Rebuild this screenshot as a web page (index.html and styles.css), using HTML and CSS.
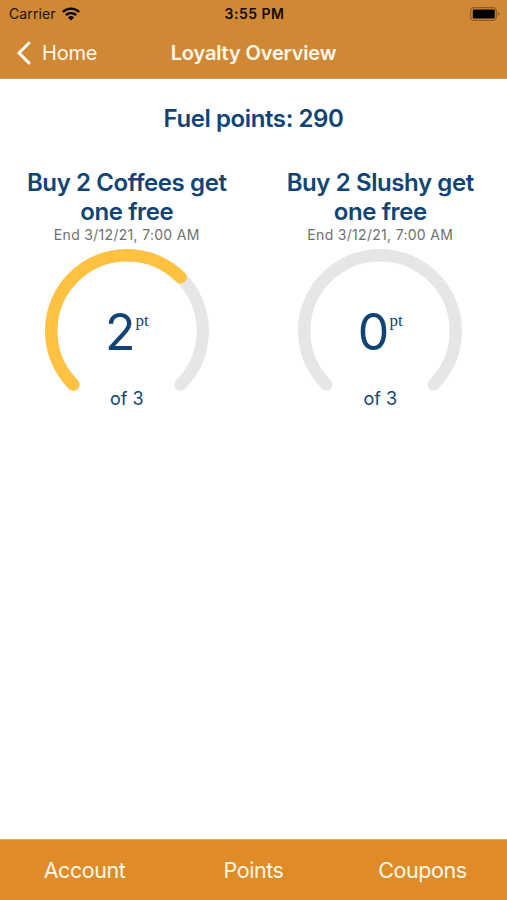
FILE: index.html
```html
<!DOCTYPE html>
<html lang="en">
<head>
<meta charset="utf-8">
<title>Loyalty Overview</title>
<link rel="stylesheet" href="styles.css">
</head>
<body>
<header class="header">
  <div class="status">
    <div class="carrier"><span>Carrier</span>
      <svg class="wifi" width="18" height="14" viewBox="0 0 18 14" fill="none" stroke="#000" stroke-width="2.4"><path d="M.9 5A11.5 11.5 0 0 1 17.1 5M3.9 8.2A7.2 7.2 0 0 1 14.1 8.2"/><path d="M6 10.4A4.3 4.3 0 0 1 12 10.4L9 13.6Z" fill="#000" stroke="none"/></svg>
    </div>
    <div class="time">3:55 PM</div>
    <svg class="battery" width="30" height="14" viewBox="0 0 30 14"><rect x=".6" y=".6" width="25.8" height="12.8" rx="3.6" fill="none" stroke="#8d5c24" stroke-width="1.2"/><rect x="2.8" y="2.6" width="22" height="8.800" rx="1.2" fill="#000"/><path d="M27.800 4.800Q31 7 27.800 9.200Z" fill="#8d5c24"/></svg>
  </div>
  <nav class="nav">
    <a class="back"><svg width="14" height="24" viewBox="0 0 14 24" fill="none" stroke="#fff" stroke-width="3" stroke-linecap="round" stroke-linejoin="round"><path d="M12 2L2 12L12 22"/></svg><span>Home</span></a>
    <h1 class="title">Loyalty Overview</h1>
  </nav>
</header>
<main class="main">
  <h2 class="fuel">Fuel points: 290</h2>
  <div class="cards">
    <section class="card">
      <h3 class="offer">Buy 2 Coffees get<br>one free</h3>
      <p class="end">End 3/12/21, 7:00 AM</p>
      <div class="gauge">
        <svg class="ring" viewBox="0 0 164 164"><circle class="track" cx="82" cy="82" r="75.800" pathLength="360" transform="rotate(135 82 82)"/><circle class="progress" cx="82" cy="82" r="75.800" pathLength="360" transform="rotate(135 82 82)"/></svg>
        <div class="value">2<span class="unit">pt</span></div>
        <div class="total">of 3</div>
      </div>
    </section>
    <section class="card">
      <h3 class="offer">Buy 2 Slushy get<br>one free</h3>
      <p class="end">End 3/12/21, 7:00 AM</p>
      <div class="gauge">
        <svg class="ring" viewBox="0 0 164 164"><circle class="track" cx="82" cy="82" r="75.800" pathLength="360" transform="rotate(135 82 82)"/></svg>
        <div class="value">0<span class="unit">pt</span></div>
        <div class="total">of 3</div>
      </div>
    </section>
  </div>
</main>
<footer class="tabs"><a>Account</a><a>Points</a><a>Coupons</a></footer>
</body>
</html>
```
FILE: styles.css
```css
* { box-sizing: border-box; }
body {
  margin: 0;
  height: 900px;
  display: flex;
  flex-direction: column;
  background: #fff;
  color: #104476;
  font-family: Inter, "Liberation Sans", sans-serif;
}
h1, h2, h3, p { margin: 0; }
.header { height: 79px; background: #d08835; border-bottom: 1px solid #d79a55; }
.status {
  height: 27px;
  display: grid;
  grid-template-columns: 1fr auto 1fr;
  align-items: center;
  padding: 0 7px 0 9px;
  color: #1a1208;
}
.carrier { display: flex; align-items: center; gap: 6px; font-size: 14px; letter-spacing: .1px; }
.time { font-size: 14px; font-weight: 600; letter-spacing: .5px; color: #120a02; }
.battery { justify-self: end; }
.nav {
  height: 51px;
  display: grid;
  grid-template-columns: 1fr auto 1fr;
  align-items: center;
  color: #fff8ec;
}
.back { display: flex; align-items: center; gap: 11px; padding-left: 17px; font-size: 20px; letter-spacing: -.2px; }
.title { font-size: 20px; font-weight: 600; letter-spacing: -.15px; }
.main { flex: 1; }
.fuel {
  margin-top: 25px;
  line-height: 30px;
  text-align: center;
  font-size: 24px;
  font-weight: 600;
  letter-spacing: -.4px;
}
.cards { display: grid; grid-template-columns: 1fr 1fr; margin-top: 34px; }
.card { display: flex; flex-direction: column; align-items: center; }
.offer { font-size: 24px; line-height: 29px; font-weight: 600; letter-spacing: -.4px; text-align: center; }
.end { font-size: 14px; line-height: 18px; color: #707070; letter-spacing: .3px; }
.gauge { position: relative; width: 164px; height: 164px; margin-top: 5px; }
.ring { display: block; width: 164px; height: 164px; }
.track, .progress {
  fill: none;
  stroke: #e6e6e6;
  stroke-width: 12.400px;
  stroke-linecap: round;
  stroke-dasharray: 270 90;
}
.progress { stroke: #ffc240; stroke-dasharray: 180 180; }
.value {
  position: absolute;
  left: 0;
  right: 0;
  top: 53px;
  display: flex;
  justify-content: center;
  font-size: 50px;
  line-height: 60px;
}
.unit { font: 17px/20px "Liberation Serif", serif; margin-top: 9px; }
.total { position: absolute; left: 0; right: 0; top: 138px; text-align: center; font-size: 18px; line-height: 24px; }
.tabs {
  height: 61px;
  display: grid;
  grid-template-columns: repeat(3, 1fr);
  align-items: center;
  text-align: center;
  background: #df8b27;
  border-top: 1px solid #e6a65b;
  color: #fff8ec;
  font-size: 21.500px;
  letter-spacing: -.45px;
}
```
